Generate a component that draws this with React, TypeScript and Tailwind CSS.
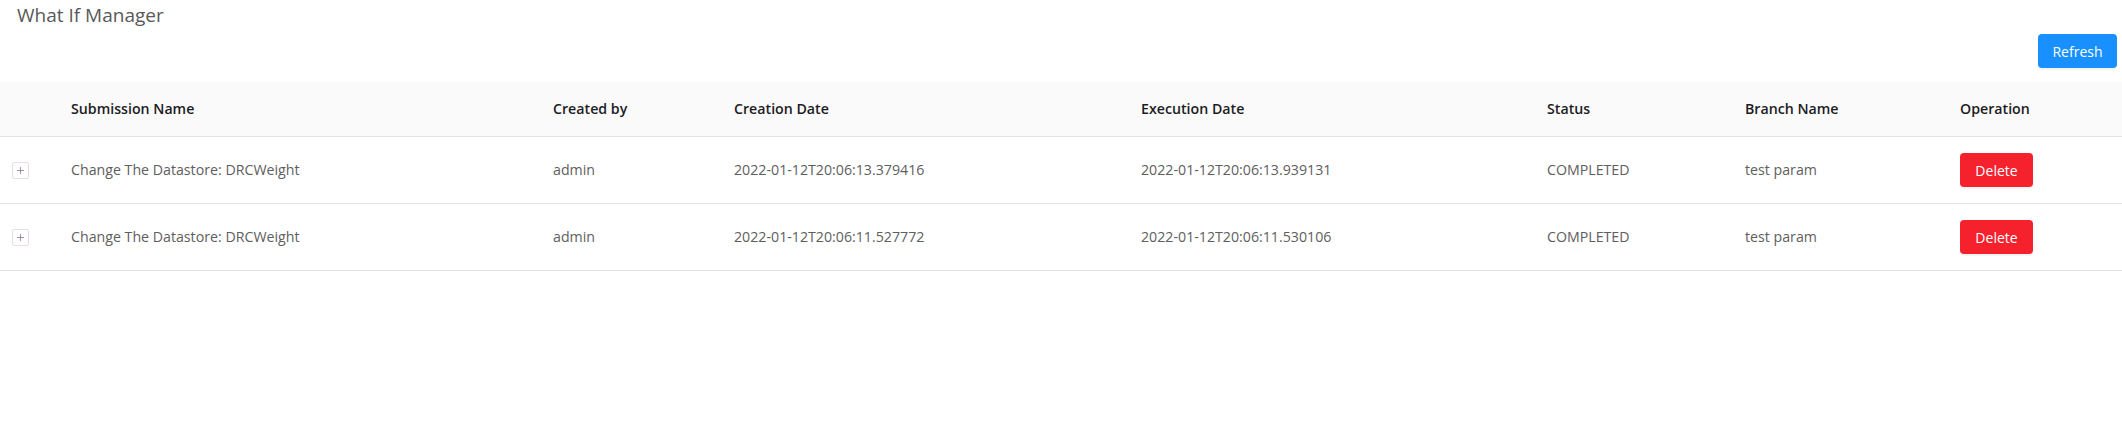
import { Plus } from 'lucide-react';

type Submission = {
  id: number;
  name: string;
  createdBy: string;
  createdAt: string;
  executedAt: string;
  status: string;
  branch: string;
};

const submissions: Submission[] = [
  {
    id: 1,
    name: 'Change The Datastore: DRCWeight',
    createdBy: 'admin',
    createdAt: '2022-01-12T20:06:13.379416',
    executedAt: '2022-01-12T20:06:13.939131',
    status: 'COMPLETED',
    branch: 'test param',
  },
  {
    id: 2,
    name: 'Change The Datastore: DRCWeight',
    createdBy: 'admin',
    createdAt: '2022-01-12T20:06:11.527772',
    executedAt: '2022-01-12T20:06:11.530106',
    status: 'COMPLETED',
    branch: 'test param',
  },
];

const columns = [
  'Submission Name',
  'Created by',
  'Creation Date',
  'Execution Date',
  'Status',
  'Branch Name',
  'Operation',
];

const grid = 'grid grid-cols-[55px_482px_181px_407px_406px_198px_215px_1fr]';

export default function App() {
  return (
    <div className="min-h-screen bg-white font-['Open_Sans',sans-serif] text-[14.2px]">
      <h1 className="pl-[17px] pt-[2px] text-[19px] font-normal leading-[26px] text-[#595959]">
        What If Manager
      </h1>

      <div className="mt-[6px] flex justify-end pr-[5px]">
        <button
          type="button"
          className="h-[34px] w-[79px] rounded-[4px] bg-[#1890ff] text-[14px] text-white shadow-[0_2px_0_rgba(0,0,0,0.045)]"
        >
          Refresh
        </button>
      </div>

      <div className="mt-[14px]">
        <div className={`${grid} h-[55px] items-center border-b border-[#e3e3e3] bg-[#fafafa]`}>
          <div />
          {columns.map((column) => (
            <div key={column} className="pl-4 font-semibold text-[#1c1c24]">
              {column}
            </div>
          ))}
        </div>

        {submissions.map((row) => (
          <div
            key={row.id}
            className={`${grid} h-[67px] items-center border-b border-[#e3e3e3] text-[#5e5e5e]`}
          >
            <div className="pl-[12px]">
              <span className="flex h-[17px] w-[17px] items-center justify-center rounded-[2px] border border-[#e6dde6] text-[#76567a]">
                <Plus size={11} strokeWidth={1.4} />
              </span>
            </div>
            <div className="pl-4">{row.name}</div>
            <div className="pl-4">{row.createdBy}</div>
            <div className="pl-4">{row.createdAt}</div>
            <div className="pl-4">{row.executedAt}</div>
            <div className="pl-4">{row.status}</div>
            <div className="pl-4">{row.branch}</div>
            <div className="pl-4">
              <button
                type="button"
                className="h-[34px] w-[73px] rounded-[4px] bg-[#f5222d] text-[14px] text-white shadow-[0_2px_0_rgba(0,0,0,0.045)]"
              >
                Delete
              </button>
            </div>
          </div>
        ))}
      </div>
    </div>
  );
}
